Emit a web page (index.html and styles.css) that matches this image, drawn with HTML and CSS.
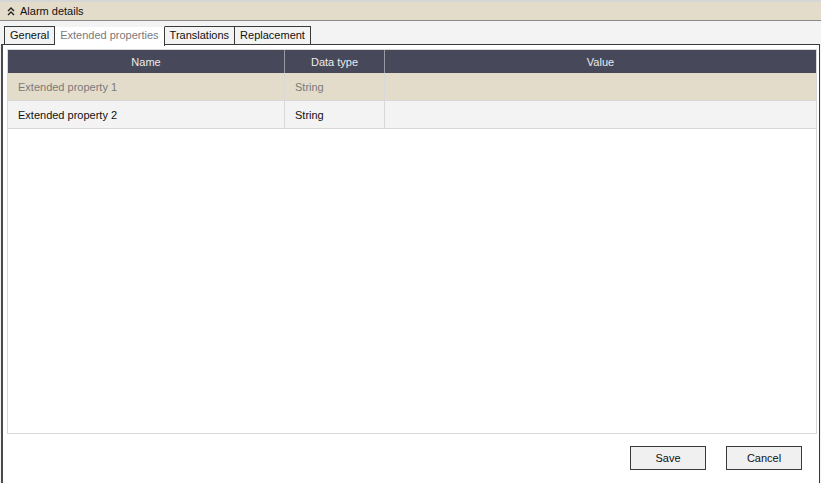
FILE: index.html
```html
<!DOCTYPE html>
<html lang="en">
<head>
    <meta charset="UTF-8">
    <title>Alarm details</title>
    <link rel="stylesheet" href="styles.css">
</head>
<body>
    <div class="section-bar">
        <svg class="collapse-icon" width="8" height="9" viewBox="0 0 8 9">
            <path d="M1 4 L4 1 L7 4 M1 8 L4 5 L7 8" fill="none" stroke="#222" stroke-width="1.4"/>
        </svg>
        <span>Alarm details</span>
    </div>

    <div class="tabs">
        <div class="tab">General</div>
        <div class="tab active">Extended properties</div>
        <div class="tab">Translations</div>
        <div class="tab">Replacement</div>
    </div>

    <div class="panel">
        <div class="grid">
            <div class="row head">
                <div class="cell name">Name</div>
                <div class="cell type">Data type</div>
                <div class="cell value">Value</div>
            </div>
            <div class="row selected">
                <div class="cell name">Extended property 1</div>
                <div class="cell type">String</div>
                <div class="cell value"></div>
            </div>
            <div class="row">
                <div class="cell name">Extended property 2</div>
                <div class="cell type">String</div>
                <div class="cell value"></div>
            </div>
        </div>

        <div class="actions">
            <button>Save</button>
            <button>Cancel</button>
        </div>
    </div>
</body>
</html>
```

FILE: styles.css
```css
* {
    margin: 0;
    padding: 0;
    box-sizing: border-box;
}

body {
    width: 821px;
    height: 483px;
    background-color: #f3f3f3;
    font-family: "Liberation Sans", Arial, sans-serif;
    font-size: 11px;
    color: #111;
    display: flex;
    flex-direction: column;
    overflow: hidden;
}

.section-bar {
    height: 21px;
    flex-shrink: 0;
    background-color: #e3dccb;
    border-top: 2px solid #d6d6d6;
    border-bottom: 1px solid #8a8a8a;
    display: flex;
    align-items: center;
    gap: 5px;
    padding-left: 7px;
}

.tabs {
    display: flex;
    flex-shrink: 0;
    padding: 5px 0 0 4px;
    height: 24px;
}

.tab {
    height: 19px;
    padding: 0 5px;
    border: 1px solid #3a3a3a;
    border-bottom: none;
    border-left: none;
    line-height: 17px;
    background-color: #f3f3f3;
}

.tab:first-child {
    border-left: 1px solid #3a3a3a;
}

.tab.active {
    background-color: #fff;
    color: #7a7a7a;
    border-top-color: #f3f3f3;
    position: relative;
    z-index: 1;
    height: 20px;
}

.panel {
    flex: 1;
    margin: -1px 1px 0 1px;
    background-color: #fff;
    border: 1px solid #3a3a3a;
    border-left: 2px solid #4a4a50;
    border-bottom: none;
    display: flex;
    flex-direction: column;
    padding: 4px 2px 0 4px;
}

.grid {
    height: 385px;
    flex-shrink: 0;
    border: 1px solid #d8d8d8;
    display: flex;
    flex-direction: column;
}

.row {
    display: flex;
    height: 28px;
    border-bottom: 1px solid #d8d8d8;
    background-color: #f3f3f3;
}

.row.head {
    height: 23px;
    background-color: #474859;
    color: #ececec;
    border-bottom: none;
}

.row.selected {
    background-color: #e3dccb;
    color: #7a7a7a;
}

.cell {
    display: flex;
    align-items: center;
    padding-left: 10px;
    border-right: 1px solid #d8d8d8;
}

.head .cell {
    justify-content: center;
    padding-left: 0;
    border-right-color: #9a9aa4;
}

.cell.name {
    width: 277px;
}

.cell.type {
    width: 100px;
}

.cell.value {
    flex: 1;
    border-right: none;
}

.actions {
    display: flex;
    justify-content: flex-end;
    gap: 20px;
    padding: 12px 15px 0 0;
}

button {
    width: 76px;
    height: 24px;
    border: 1px solid #3a3a3a;
    background-color: #f0f0f0;
    font-family: "Liberation Sans", Arial, sans-serif;
    font-size: 11px;
    color: #111;
}
```
